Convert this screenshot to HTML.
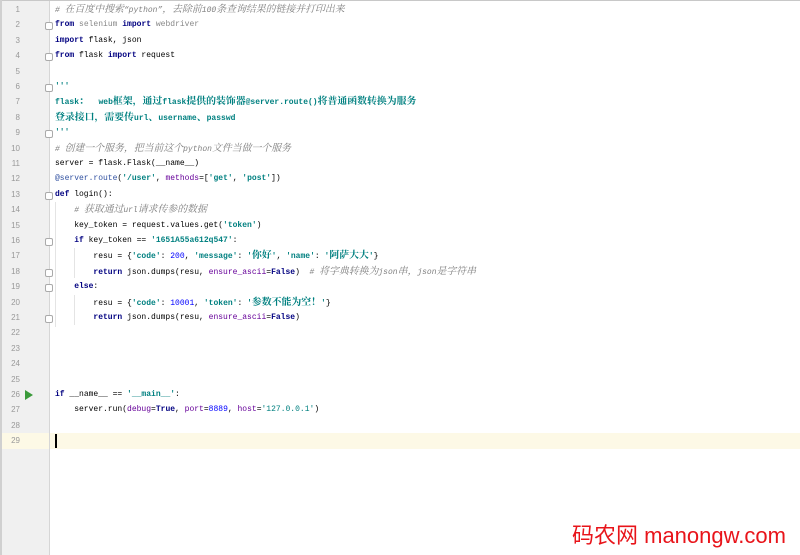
<!DOCTYPE html>
<html><head><meta charset="utf-8"><style>
body{margin:0;width:800px;height:555px;background:#fff;overflow:hidden;position:relative;font-family:"Liberation Mono","Noto Serif CJK SC",monospace;}
#top{position:absolute;left:0;top:0;width:800px;height:1px;background:#c8c8c8}
#lb{position:absolute;left:0;top:0;width:2px;height:555px;background:#d0d0d0}
#gut{position:absolute;left:2px;top:1px;width:47px;height:554px;background:#f0f0f0;border-right:1px solid #d6d6d6}
#cur{position:absolute;left:50px;top:433px;width:750px;height:16px;background:#fdf9e6}
#gcur{position:absolute;left:2px;top:433px;width:47px;height:16px;background:#fdf9e6}
.n{position:absolute;left:0;width:20px;text-align:right;font-size:8px;color:#999;font-family:"Liberation Sans",sans-serif;line-height:15.4px}
.l{position:absolute;left:55px;font-size:8px;line-height:15.4px;white-space:pre;color:#000}
.c{font-size:9.9px}
.k{color:#000080;font-weight:bold}
.s{color:#008080;font-weight:bold}
.cm{color:#808080;font-style:italic}
.d{color:#008080;font-weight:bold}
.p{color:#660099}
.num{color:#0000ff}
.at{color:#3050a0}
.f{position:absolute;left:45px;width:6px;height:6px;border:1px solid #aaa;border-radius:2px;background:#fff}
.ig{position:absolute;width:1px;background:#e4e4e4}
#wm{position:absolute;left:572px;top:518px;font-size:22px;color:#e8141a;font-family:"Liberation Sans","Noto Sans CJK SC",sans-serif;white-space:nowrap}
#caret{position:absolute;left:55px;top:434px;width:2px;height:14px;background:#000}
#run{position:absolute;left:25px;top:390px;width:0;height:0;border-left:8px solid #3a9a3a;border-top:5px solid transparent;border-bottom:5px solid transparent}
</style></head><body>
<div id="top"></div><div id="lb"></div><div id="gut"></div><div id="gcur"></div><div id="cur"></div>
<div id="run"></div>
<div class="n" style="top:2px">1</div><div class="n" style="top:17.4px">2</div><div class="n" style="top:32.8px">3</div><div class="n" style="top:48.2px">4</div><div class="n" style="top:63.6px">5</div><div class="n" style="top:79px">6</div><div class="n" style="top:94.4px">7</div><div class="n" style="top:109.8px">8</div><div class="n" style="top:125.2px">9</div><div class="n" style="top:140.6px">10</div><div class="n" style="top:156px">11</div><div class="n" style="top:171.4px">12</div><div class="n" style="top:186.8px">13</div><div class="n" style="top:202.2px">14</div><div class="n" style="top:217.6px">15</div><div class="n" style="top:233px">16</div><div class="n" style="top:248.4px">17</div><div class="n" style="top:263.8px">18</div><div class="n" style="top:279.2px">19</div><div class="n" style="top:294.6px">20</div><div class="n" style="top:310px">21</div><div class="n" style="top:325.4px">22</div><div class="n" style="top:340.8px">23</div><div class="n" style="top:356.2px">24</div><div class="n" style="top:371.6px">25</div><div class="n" style="top:387px">26</div><div class="n" style="top:402.4px">27</div><div class="n" style="top:417.8px">28</div><div class="n" style="top:433.2px">29</div>
<div class="f" style="top:22px"></div><div class="f" style="top:53px"></div><div class="f" style="top:84px"></div><div class="f" style="top:130px"></div><div class="f" style="top:192px"></div><div class="f" style="top:238px"></div><div class="f" style="top:269px"></div><div class="f" style="top:284px"></div><div class="f" style="top:315px"></div>
<div class="ig" style="left:74px;top:248px;height:30px"></div><div class="ig" style="left:74px;top:295px;height:30px"></div><div class="ig" style="left:55px;top:202px;height:125px"></div>
<div class="l" style="top:2px"><span class="cm"># <span class="c">在百度中搜索</span>“python”<span class="c">，去除前</span>100<span class="c">条查询结果的链接并打印出来</span></span></div>
<div class="l" style="top:17.4px"><span class="k">from</span> <span style="color:#888">selenium</span> <span class="k">import</span> <span style="color:#888">webdriver</span></div>
<div class="l" style="top:32.8px"><span class="k">import</span> flask, json</div>
<div class="l" style="top:48.2px"><span class="k">from</span> flask <span class="k">import</span> request</div>
<div class="l" style="top:79px"><span class="d">'''</span></div>
<div class="l" style="top:94.4px"><span class="d">flask<span class="c">：</span>  web<span class="c">框架，通过</span>flask<span class="c">提供的装饰器</span>@server.route()<span class="c">将普通函数转换为服务</span></span></div>
<div class="l" style="top:109.8px"><span class="d"><span class="c">登录接口，需要传</span>url<span class="c">、</span>username<span class="c">、</span>passwd</span></div>
<div class="l" style="top:125.2px"><span class="d">'''</span></div>
<div class="l" style="top:140.6px"><span class="cm"># <span class="c">创建一个服务，把当前这个</span>python<span class="c">文件当做一个服务</span></span></div>
<div class="l" style="top:156px">server = flask.Flask(__name__)</div>
<div class="l" style="top:171.4px"><span class="at">@server.route</span>(<span class="s">'/user'</span>, <span class="p">methods</span>=[<span class="s">'get'</span>, <span class="s">'post'</span>])</div>
<div class="l" style="top:186.8px"><span class="k">def</span> login():</div>
<div class="l" style="top:202.2px">    <span class="cm"># <span class="c">获取通过</span>url<span class="c">请求传参的数据</span></span></div>
<div class="l" style="top:217.6px">    key_token = request.values.get(<span class="s">'token'</span>)</div>
<div class="l" style="top:233px">    <span class="k">if</span> key_token == <span class="s">'1651A55a612q547'</span>:</div>
<div class="l" style="top:248.4px">        resu = {<span class="s">'code'</span>: <span class="num">200</span>, <span class="s">'message'</span>: <span class="s">'<span class="c">你好</span>'</span>, <span class="s">'name'</span>: <span class="s">'<span class="c">阿萨大大</span>'</span>}</div>
<div class="l" style="top:263.8px">        <span class="k">return</span> json.dumps(resu, <span class="p">ensure_ascii</span>=<span class="k">False</span>)  <span class="cm"># <span class="c">将字典转换为</span>json<span class="c">串，</span>json<span class="c">是字符串</span></span></div>
<div class="l" style="top:279.2px">    <span class="k">else</span>:</div>
<div class="l" style="top:294.6px">        resu = {<span class="s">'code'</span>: <span class="num">10001</span>, <span class="s">'token'</span>: <span class="s">'<span class="c">参数不能为空！</span>'</span>}</div>
<div class="l" style="top:310px">        <span class="k">return</span> json.dumps(resu, <span class="p">ensure_ascii</span>=<span class="k">False</span>)</div>
<div class="l" style="top:387px"><span class="k">if</span> __name__ == <span class="s">'__main__'</span>:</div>
<div class="l" style="top:402.4px">    server.run(<span class="p">debug</span>=<span class="k">True</span>, <span class="p">port</span>=<span class="num">8889</span>, <span class="p">host</span>=<span class="s" style="font-weight:normal">'127.0.0.1'</span>)</div>
<div id="caret"></div>
<div id="wm">码农网 manongw.com</div>
</body></html>
